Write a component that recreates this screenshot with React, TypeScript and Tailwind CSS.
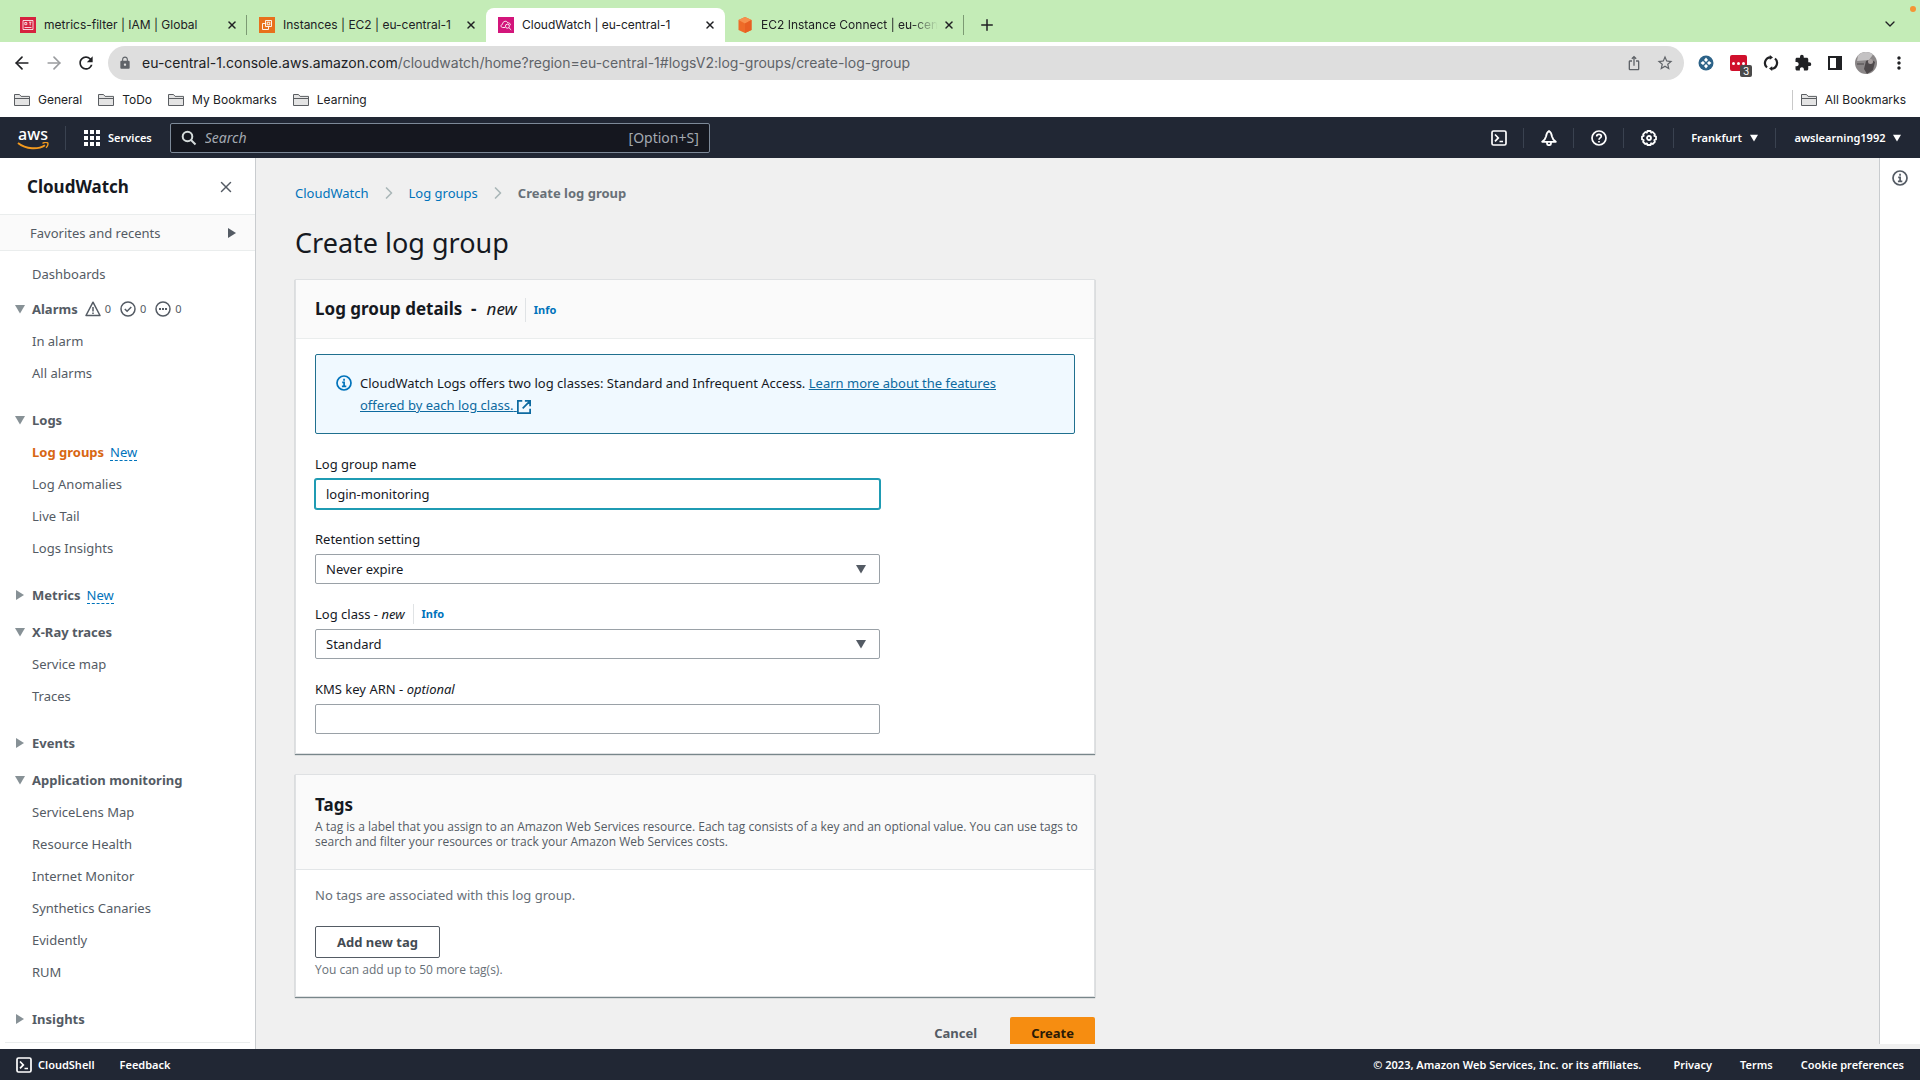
import { useState, type ReactNode } from "react";
import { ArrowLeft, ArrowRight, ChevronDown, ChevronRight, Plus, X } from "lucide-react";
import { MdExtension, MdLock, MdMoreVert, MdOutlineIosShare, MdRefresh, MdStarBorder } from "react-icons/md";

type Item = { label: string; active?: boolean; isNew?: boolean };
type Section = { title: string; open: boolean; isNew?: boolean; alarms?: boolean; items: Item[] };

const sections: Section[] = [
  { title: "Alarms", open: true, alarms: true, items: [{ label: "In alarm" }, { label: "All alarms" }] },
  {
    title: "Logs",
    open: true,
    items: [
      { label: "Log groups", active: true, isNew: true },
      { label: "Log Anomalies" },
      { label: "Live Tail" },
      { label: "Logs Insights" },
    ],
  },
  { title: "Metrics", open: false, isNew: true, items: [] },
  { title: "X-Ray traces", open: true, items: [{ label: "Service map" }, { label: "Traces" }] },
  { title: "Events", open: false, items: [] },
  {
    title: "Application monitoring",
    open: true,
    items: [
      { label: "ServiceLens Map" },
      { label: "Resource Health" },
      { label: "Internet Monitor" },
      { label: "Synthetics Canaries" },
      { label: "Evidently" },
      { label: "RUM" },
    ],
  },
  { title: "Insights", open: false, items: [] },
];

function Caret({ className = "", right = false }: { className?: string; right?: boolean }) {
  return (
    <svg viewBox="0 0 10 10" className={className} fill="currentColor" aria-hidden="true">
      <path d={right ? "M1 0 L9 5 L1 10 Z" : "M0 1 H10 L5 9.5 Z"} />
    </svg>
  );
}

function InfoIcon({ className = "" }: { className?: string }) {
  return (
    <svg viewBox="0 0 16 16" className={className} fill="none" stroke="currentColor" strokeWidth="1.7" aria-hidden="true">
      <circle cx="8" cy="8" r="7" />
      <path d="M6.2 7.3h1.9v4M5.9 11.3h4.4" />
      <path d="M7.2 4.7h1.7" strokeWidth="1.9" />
    </svg>
  );
}

function ShellIcon({ className = "" }: { className?: string }) {
  return (
    <svg viewBox="0 0 16 16" className={className} fill="none" stroke="currentColor" strokeWidth="1.7" aria-hidden="true">
      <rect x="1" y="1" width="14" height="14" rx="1.5" />
      <path d="M4 4.5l3.3 3.4L4 11.3M8.5 11.5h3.5" />
    </svg>
  );
}

function BellIcon() {
  return (
    <svg viewBox="0 0 16 16" className="size-4" fill="none" stroke="currentColor" strokeWidth="1.8" strokeLinejoin="round" aria-hidden="true">
      <path d="M8 1C6 2.2 5.4 4 5 6.5 4.5 9 3 10.5 1.2 11.8h13.6C13 10.5 11.5 9 11 6.5 10.6 4 10 2.2 8 1Z" />
      <path d="M6 12v1.2a2 2 0 0 0 4 0V12" />
    </svg>
  );
}

function HelpIcon() {
  return (
    <svg viewBox="0 0 16 16" className="size-4" fill="none" stroke="currentColor" strokeWidth="1.7" aria-hidden="true">
      <circle cx="8" cy="8" r="7" />
      <path d="M5.7 6.4C5.7 3.7 10.3 3.8 10.3 6.3 10.3 8 8 7.9 8 9.8" />
      <path d="M8 10.9v1.7" />
    </svg>
  );
}

function GearIcon() {
  return (
    <svg viewBox="0 0 16 16" className="size-4" fill="none" stroke="currentColor" strokeWidth="1.8" strokeLinejoin="round" aria-hidden="true">
      <path d="M6.4 1h3.2l.5 1.6 1.6-.6 2.2 2.3-.6 1.6 1.7.6v3l-1.7.6.6 1.7-2.2 2.2-1.6-.7-.5 1.7H6.4l-.5-1.7-1.6.7-2.2-2.2.6-1.7L1 9.5v-3l1.7-.6-.6-1.6L4.3 2l1.6.6Z" />
      <circle cx="8" cy="8" r="2" />
    </svg>
  );
}

function Folder() {
  return (
    <svg viewBox="0 0 16 14" className="h-3.5 w-4" fill="none" stroke="#5b5e62" aria-hidden="true">
      <path d="M.5 12.5v-11h5l1.6 1.9h8.4v9.1Z" fill="#e4e4e4" />
      <path d="M.5 5.5h15" />
    </svg>
  );
}

function IamIcon() {
  return (
    <svg viewBox="0 0 16 16" className="size-4" fill="none" stroke="#fff" strokeWidth=".8" aria-hidden="true">
      <rect width="16" height="16" fill="#d6223f" stroke="none" />
      <path d="M3 3.5h10v9H3ZM4.8 5.5h2v2.2h-2ZM4.5 10.5h7M9 5.2h2.5M10.2 5.2v3.2" />
    </svg>
  );
}

function Ec2Icon() {
  return (
    <svg viewBox="0 0 16 16" className="size-4" fill="none" stroke="#fff" strokeWidth=".9" aria-hidden="true">
      <rect width="16" height="16" fill="#e8701c" stroke="none" />
      <path d="M6.5 3.5h6v6h-6ZM6.5 6.5h-3v6h6v-3M8.2 5.2h2.6v2.6H8.2Z" />
    </svg>
  );
}

function CloudWatchIcon() {
  return (
    <svg viewBox="0 0 16 16" className="size-4" fill="none" stroke="#fff" strokeWidth=".9" aria-hidden="true">
      <rect width="16" height="16" fill="#d3157b" stroke="none" />
      <path d="M7 10.5H4.5C2.5 10.3 2.6 7.5 4.5 7.3 4.5 4 9 3.2 9.8 5.9 11.3 5.6 12.6 6.6 12.3 8.2" />
      <circle cx="9.4" cy="9.2" r="2" />
      <path d="m10.9 10.7 2.3 2.2" />
    </svg>
  );
}

function ConnectIcon() {
  return (
    <svg viewBox="0 0 16 16" className="size-4" aria-hidden="true">
      <path d="M8 0l6.5 3v10L8 16 1.5 13V3Z" fill="#ee6b28" />
      <path d="M8 0l6.5 3L8 6.5 1.5 3Z" fill="#f6914d" />
      <path d="M8 6.5 14.5 3v10L8 16Z" fill="#e85f22" />
    </svg>
  );
}

function AwsLogo() {
  return (
    <span className="flex w-8 flex-col items-center text-base leading-4 font-medium">
      aws
      <svg viewBox="0 0 32 8" className="h-2 w-8" fill="none" stroke="#f39a1e" aria-hidden="true">
        <path d="M1 1C9 7.6 21.5 7.6 28 3.2" strokeWidth="1.9" />
        <path d="M25.5 1.3c2-.9 4.4-1 5.2-.4.5.9-.2 3.4-1.6 5" strokeWidth="1.4" />
      </svg>
    </span>
  );
}

const tabs = [
  { title: "metrics-filter | IAM | Global", icon: <IamIcon /> },
  { title: "Instances | EC2 | eu-central-1", icon: <Ec2Icon /> },
  { title: "CloudWatch | eu-central-1", icon: <CloudWatchIcon />, active: true },
  { title: "EC2 Instance Connect | eu-cen", icon: <ConnectIcon />, fade: true },
];

function BrowserChrome() {
  return (
    <div className="shrink-0 bg-white font-[Inter,sans-serif] text-[#202124]">
      <div className="flex h-[42px] items-end bg-[#c4ecb7] pl-2">
        {tabs.map((tab, i) => (
          <div
            key={tab.title}
            className={
              tab.active
                ? "flex h-[34px] w-[239px] items-center rounded-t-lg bg-white pr-[9px] pl-3"
                : "flex h-[34px] w-[239px] items-center pr-[9px] pl-3"
            }
          >
            {tab.icon}
            <span
              className={
                tab.fade ? "ml-2 mask-r-from-85% text-xs whitespace-nowrap" : "ml-2 text-xs whitespace-nowrap"
              }
            >
              {tab.title}
            </span>
            <button type="button" aria-label="Close tab" className="ml-auto">
              <X size={12} strokeWidth={3} />
            </button>
            {(i === 0 || i === 3) && <span className="-mr-[9px] ml-2 h-5 w-px bg-[#7c9a73]" />}
          </div>
        ))}
        <button type="button" aria-label="New tab" className="mb-2 ml-3.5">
          <Plus size={18} strokeWidth={2} />
        </button>
        <div className="ml-auto flex h-[42px] items-start">
          <ChevronDown size={16} strokeWidth={2} className="mt-4 mr-3" />
          <span className="mt-1.5 mr-1 size-1.5 rounded-full bg-[#f59434]" />
        </div>
      </div>

      <div className="flex h-[42px] items-center pr-[11px] pl-3">
        <button type="button" aria-label="Back">
          <ArrowLeft size={20} strokeWidth={2} />
        </button>
        <button type="button" aria-label="Forward" className="ml-3 text-[#9a9c9f]">
          <ArrowRight size={20} strokeWidth={2} />
        </button>
        <button type="button" aria-label="Reload" className="ml-3">
          <MdRefresh size={20} />
        </button>
        <div className="ml-3 flex h-[34px] flex-1 items-center rounded-full bg-[#dedede] pr-2.5 pl-2.5 text-[#5f6368]">
          <MdLock size={14} />
          <span className="ml-2.5 flex-1 text-sm">
            <span className="text-[#202124]">eu-central-1.console.aws.amazon.com</span>
            /cloudwatch/home?region=eu-central-1#logsV2:log-groups/create-log-group
          </span>
          <MdOutlineIosShare size={16} />
          <MdStarBorder size={18} className="ml-3.5" />
        </div>
        <div className="ml-3.5 flex items-center">
          <svg viewBox="0 0 16 16" className="size-4" aria-hidden="true">
            <circle cx="8" cy="8" r="7.5" fill="#2c6288" />
            <path d="M8 2.5 10 5 8 7 6 5ZM8 9l2 2-2 2.5L6 11ZM2.5 8 5 6l2 2-2 2ZM9 8l2-2 2.5 2L11 10Z" fill="#fff" />
          </svg>
          <div className="relative ml-4 flex h-4 w-[17px] items-center justify-center gap-0.5 rounded-xs bg-[#d0102c]">
            <span className="size-[3px] rounded-full bg-white" />
            <span className="size-[3px] rounded-full bg-white" />
            <span className="size-[3px] rounded-full bg-white" />
            <span className="absolute top-2.5 left-2.5 rounded-xs bg-[#4a4a4a] px-[3px] text-[10px] leading-3 text-white">3</span>
          </div>
          <svg viewBox="0 0 16 16" className="ml-4 size-4" fill="none" stroke="#202124" strokeWidth="2.2" aria-hidden="true">
            <path d="M4 12.5A5.8 5.8 0 0 1 7.5 2.3M12 3.5A5.8 5.8 0 0 1 8.5 13.700" />
            <path d="M6.800 0v4.800L10 2.400ZM9.200 16v-4.800L6 13.600Z" fill="#202124" stroke="none" />
          </svg>
          <MdExtension size={18} className="ml-[15px]" />
          <svg viewBox="0 0 16 16" className="ml-[15px] size-4" fill="#202124" aria-hidden="true">
            <path d="M1 1h14v14H1Zm2 2v10h6V3Z" fillRule="evenodd" />
          </svg>
          <svg viewBox="0 0 22 22" className="ml-3 size-[22px]" aria-hidden="true">
            <circle cx="11" cy="11" r="11" fill="#8b8788" />
            <path d="M3 3.5A11 11 0 0 1 18 2.5L14 8 2 9Z" fill="#c4c2c3" />
            <path d="M11 9c3-2 7-1 9 1l-2 8-6 4-3-5Z" fill="#4e494b" />
            <circle cx="15.5" cy="9.5" r="2.5" fill="#a9a1a1" />
            <path d="M2 11h7v2H2Z" fill="#6b6768" />
          </svg>
          <MdMoreVert size={20} className="ml-3" />
        </div>
      </div>

      <div className="flex h-[33px] items-center gap-4 px-3.5 pb-0.5 text-xs">
        {["General", "ToDo", "My Bookmarks", "Learning"].map((name) => (
          <a key={name} href="#" className="flex items-center gap-2">
            <Folder />
            {name}
          </a>
        ))}
        <a href="#" className="ml-auto flex h-5 items-center gap-2 border-l border-[#c9c9c9] pl-2">
          <Folder />
          All Bookmarks
        </a>
      </div>
    </div>
  );
}

function HeaderCell({ label, children }: { label: string; children: ReactNode }) {
  return (
    <button type="button" aria-label={label} className="flex h-5 w-[50px] items-center justify-center border-r border-[#3a4250]">
      {children}
    </button>
  );
}

function AwsHeader() {
  return (
    <header className="flex h-[41px] shrink-0 items-center bg-[#212734] text-white">
      <a href="#" className="ml-[17px]">
        <AwsLogo />
      </a>
      <div className="ml-4 h-6 w-px bg-[#3a4250]" />
      <button type="button" className="ml-[18px] flex items-center gap-2 text-[11px] font-semibold">
        <svg viewBox="0 0 16 16" className="size-4" fill="currentColor" aria-hidden="true">
          <path d="M0 0h4v4H0ZM6 0h4v4H6ZM12 0h4v4h-4ZM0 6h4v4H0ZM6 6h4v4H6ZM12 6h4v4h-4ZM0 12h4v4H0ZM6 12h4v4H6ZM12 12h4v4h-4Z" />
        </svg>
        Services
      </button>
      <label className="ml-[18px] flex h-[30px] w-[540px] items-center rounded-xs border border-[#7d8998] bg-[#15171f] pr-2.5 pl-2.5">
        <svg viewBox="0 0 16 16" className="size-4" fill="none" stroke="#d5dbdb" strokeWidth="2" aria-hidden="true">
          <circle cx="6.5" cy="6.5" r="4.8" />
          <path d="m10 10 4.5 4.5" />
        </svg>
        <input
          type="search"
          aria-label="Search"
          placeholder="Search"
          className="ml-2 min-w-0 flex-1 bg-transparent text-sm outline-none placeholder:text-[#a3a9b1] placeholder:italic"
        />
        <span className="text-sm text-[#a3a9b1]">[Option+S]</span>
      </label>
      <div className="ml-auto flex items-center text-[11px] font-semibold">
        <HeaderCell label="CloudShell">
          <ShellIcon className="size-4" />
        </HeaderCell>
        <HeaderCell label="Notifications">
          <BellIcon />
        </HeaderCell>
        <HeaderCell label="Help">
          <HelpIcon />
        </HeaderCell>
        <HeaderCell label="Settings">
          <GearIcon />
        </HeaderCell>
        <button type="button" className="flex h-5 w-[102px] items-center justify-center gap-2 border-r border-[#3a4250]">
          Frankfurt <Caret className="size-2" />
        </button>
        <button type="button" className="flex w-[144px] items-center justify-center gap-2">
          awslearning1992 <Caret className="size-2" />
        </button>
      </div>
    </header>
  );
}

function NewTag() {
  return (
    <a href="#" className="border-b border-dashed border-[#0073bb] leading-4 font-normal text-[#0073bb]">
      New
    </a>
  );
}

function AlarmCounts() {
  return (
    <span className="ml-px flex items-center gap-[9px] text-[11px] font-normal">
      <span className="flex items-center gap-1">
        <svg viewBox="0 0 16 16" className="size-4" fill="none" stroke="currentColor" strokeWidth="1.5" strokeLinejoin="round">
          <path d="M8 1.2 15 14.5H1ZM8 6v4.5M8 11.5v1.5" />
        </svg>
        0
      </span>
      <span className="flex items-center gap-1">
        <svg viewBox="0 0 16 16" className="size-4" fill="none" stroke="currentColor" strokeWidth="1.5">
          <circle cx="8" cy="8" r="7" />
          <path d="m4.8 8 2.3 2.3L11.3 6" />
        </svg>
        0
      </span>
      <span className="flex items-center gap-1">
        <svg viewBox="0 0 16 16" className="size-4" fill="none" stroke="currentColor" strokeWidth="1.5">
          <circle cx="8" cy="8" r="7" />
          <path d="M4 8h2M7 8h2M10 8h2" strokeWidth="1.8" />
        </svg>
        0
      </span>
    </span>
  );
}

function Sidebar() {
  return (
    <nav className="flex w-64 shrink-0 flex-col border-r border-[#c9cccf] bg-white text-[13px] leading-[22px] text-[#545b64]">
      <div className="flex h-14 items-center justify-between pt-0.5 pr-5 pl-[27px]">
        <h2 className="text-[17px] font-bold text-[#16191f]">CloudWatch</h2>
        <button type="button" aria-label="Close navigation">
          <X size={18} strokeWidth={2} />
        </button>
      </div>
      <button type="button" className="flex h-[37px] shrink-0 items-center justify-between border-y border-[#eaeded] bg-[#fafafa] pr-[18px] pl-[30px]">
        Favorites and recents
        <Caret right className="size-2.5" />
      </button>
      <div className="flex flex-col gap-[15px] px-[15px] pt-3">
        <a href="#" className="-mb-0.5 pl-[17px]">
          Dashboards
        </a>
        {sections.map((section) => (
          <div key={section.title} className={section.open ? "pb-2.5" : ""}>
            <div className="flex items-center gap-1.5 font-bold">
              <button type="button" className="flex items-center gap-[7px]">
                <Caret right={!section.open} className="size-2.5 text-[#879196]" />
                {section.title}
              </button>
              {section.isNew && <NewTag />}
              {section.alarms && <AlarmCounts />}
            </div>
            {section.items.length > 0 && (
              <ul className="mt-2.5 flex flex-col gap-2.5 pl-[17px]">
                {section.items.map((item) => (
                  <li key={item.label} className="flex items-center gap-1.5">
                    <a href="#" className={item.active ? "font-bold text-[#d86613]" : ""}>
                      {item.label}
                    </a>
                    {item.isNew && <NewTag />}
                  </li>
                ))}
              </ul>
            )}
          </div>
        ))}
        <hr className="-mx-2.5 -mt-[3px] border-[#eaeded]" />
      </div>
    </nav>
  );
}

const cardClass = "border border-[#dfe1e3] bg-white shadow-[0_1px_1px_0_rgba(0,28,36,0.5)]";
const fieldClass = "h-[30px] w-full rounded-xs border border-[#9aa1a7] bg-white px-2.5";

function Field({ id, label, hint, info, children }: { id: string; label: string; hint?: string; info?: boolean; children: ReactNode }) {
  return (
    <div>
      <div className="mb-1 flex items-center">
        <label htmlFor={id}>
          {label}
          {hint && (
            <>
              {" "}- <i>{hint}</i>
            </>
          )}
        </label>
        {info && (
          <a href="#" className="ml-2 border-l border-[#e0e3e5] pl-2 text-[11px] leading-5 font-bold text-[#0073bb]">
            Info
          </a>
        )}
      </div>
      <div className="relative">{children}</div>
    </div>
  );
}

function CreateForm() {
  const [name, setName] = useState("login-monitoring");
  const [kms, setKms] = useState("");

  return (
    <form className="w-full max-w-[800px]" onSubmit={(e) => e.preventDefault()}>
      <section className={cardClass}>
        <div className="flex h-[59px] items-center border-b border-[#eaeded] bg-[#fafafa] px-[19px] text-[17px]">
          <h2 className="font-bold">Log group details&nbsp; -</h2>
          <i className="ml-2.5">new</i>
          <a href="#" className="mt-0.5 ml-2 border-l border-[#e0e3e5] pl-2 text-[11px] leading-6 font-bold text-[#0073bb]">
            Info
          </a>
        </div>
        <div className="px-[19px] pt-[15px] pb-[19px]">
          <div className="flex h-20 items-start gap-2 rounded-xs border border-[#20708f] bg-[#f0f9ff] px-5 pt-[17px]">
            <InfoIcon className="mt-[3px] size-4 shrink-0 text-[#0073bb]" />
            <p className="pr-8">
              CloudWatch Logs offers two log classes: Standard and Infrequent Access.{" "}
              <a href="#" className="text-[#0d6aa0] underline">
                Learn more about the features offered by each log class.{" "}
                <svg viewBox="0 0 16 16" className="inline size-3.5" fill="none" stroke="currentColor" strokeWidth="2" aria-hidden="true">
                  <path d="M6 1H1v14h14v-5M9 1h6v6M15 1 6.5 9.5" />
                </svg>
              </a>
            </p>
          </div>
          <div className="mt-[19px] flex max-w-[565px] flex-col gap-[19px]">
            <Field id="name" label="Log group name">
              <input
                id="name"
                value={name}
                onChange={(e) => setName(e.target.value)}
                className="h-[30px] w-full rounded-xs border border-[#1f9bb3] bg-white px-2.5 ring-1 ring-[#1f9bb3] outline-none"
              />
            </Field>
            <Field id="retention" label="Retention setting">
              <select id="retention" className={`${fieldClass} appearance-none`}>
                <option>Never expire</option>
                <option>1 day</option>
                <option>1 week</option>
                <option>1 month</option>
              </select>
              <Caret className="pointer-events-none absolute top-2.5 right-3.5 size-2.5 text-[#545b64]" />
            </Field>
            <Field id="logclass" label="Log class" hint="new" info>
              <select id="logclass" className={`${fieldClass} appearance-none`}>
                <option>Standard</option>
                <option>Infrequent Access</option>
              </select>
              <Caret className="pointer-events-none absolute top-2.5 right-3.5 size-2.5 text-[#545b64]" />
            </Field>
            <Field id="kms" label="KMS key ARN" hint="optional">
              <input id="kms" value={kms} onChange={(e) => setKms(e.target.value)} className={fieldClass} />
            </Field>
          </div>
        </div>
      </section>

      <section className={`${cardClass} mt-5`}>
        <div className="border-b border-[#e3e6e8] bg-[#fafafa] pt-[19px] pr-3 pb-5 pl-[19px]">
          <h2 className="text-[17px] leading-[22px] font-bold">Tags</h2>
          <p className="mt-[3px] font-['Open_Sans',sans-serif] text-xs leading-[15px] text-[#545b64]">
            A tag is a label that you assign to an Amazon Web Services resource. Each tag consists of a key and an optional value. You can use
            tags to search and filter your resources or track your Amazon Web Services costs.
          </p>
        </div>
        <div className="px-[19px] pt-[14px] pb-[19px] text-[#687078]">
          <p>No tags are associated with this log group.</p>
          <button type="button" className="mt-5 h-8 rounded-xs border border-[#545b64] px-[21px] font-bold text-[#444b53]">
            Add new tag
          </button>
          <p className="mt-1 font-['Open_Sans',sans-serif] text-xs leading-[15px]">You can add up to 50 more tag(s).</p>
        </div>
      </section>

      <div className="mt-5 flex justify-end gap-3 font-bold">
        <button type="button" className="h-8 px-[21px] text-[#545b64]">
          Cancel
        </button>
        <button type="submit" className="h-8 rounded-xs bg-[#f68d11] px-[21px] text-[#2b1a06]">
          Create
        </button>
      </div>
    </form>
  );
}

export default function App() {
  return (
    <div className="flex h-screen flex-col overflow-hidden bg-[#f0f0f0] font-['Noto_Sans',sans-serif] text-[13px] leading-[22px] text-[#16191f]">
      <BrowserChrome />
      <AwsHeader />
      <div className="flex min-h-0 flex-1">
        <Sidebar />
        <main className="mb-[5px] min-w-0 flex-1 overflow-hidden px-[39px] pt-6">
          <nav aria-label="Breadcrumb" className="flex items-center gap-2.5">
            <a href="#" className="text-[#0073bb]">
              CloudWatch
            </a>
            <ChevronRight size={20} className="text-[#aab7b8]" />
            <a href="#" className="text-[#0073bb]">
              Log groups
            </a>
            <ChevronRight size={20} className="text-[#aab7b8]" />
            <span className="font-bold text-[#687078]">Create log group</span>
          </nav>
          <h1 className="mt-[21px] mb-[18px] text-[27px] leading-9">Create log group</h1>
          <CreateForm />
        </main>
        <aside className="mb-[5px] flex w-[41px] shrink-0 justify-center border-l border-[#c9cccf] bg-white pt-3">
          <button type="button" aria-label="Open info panel" className="h-4 text-[#545b64]">
            <InfoIcon className="size-4" />
          </button>
        </aside>
      </div>
      <footer className="flex h-[31px] shrink-0 items-center bg-[#212734] px-4 text-[11px] font-semibold text-white">
        <a href="#" className="flex items-center gap-1.5">
          <ShellIcon className="size-4" />
          CloudShell
        </a>
        <a href="#" className="ml-[25px]">
          Feedback
        </a>
        <span className="ml-auto">© 2023, Amazon Web Services, Inc. or its affiliates.</span>
        <a href="#" className="ml-8">
          Privacy
        </a>
        <a href="#" className="ml-7">
          Terms
        </a>
        <a href="#" className="ml-7">
          Cookie preferences
        </a>
      </footer>
    </div>
  );
}
